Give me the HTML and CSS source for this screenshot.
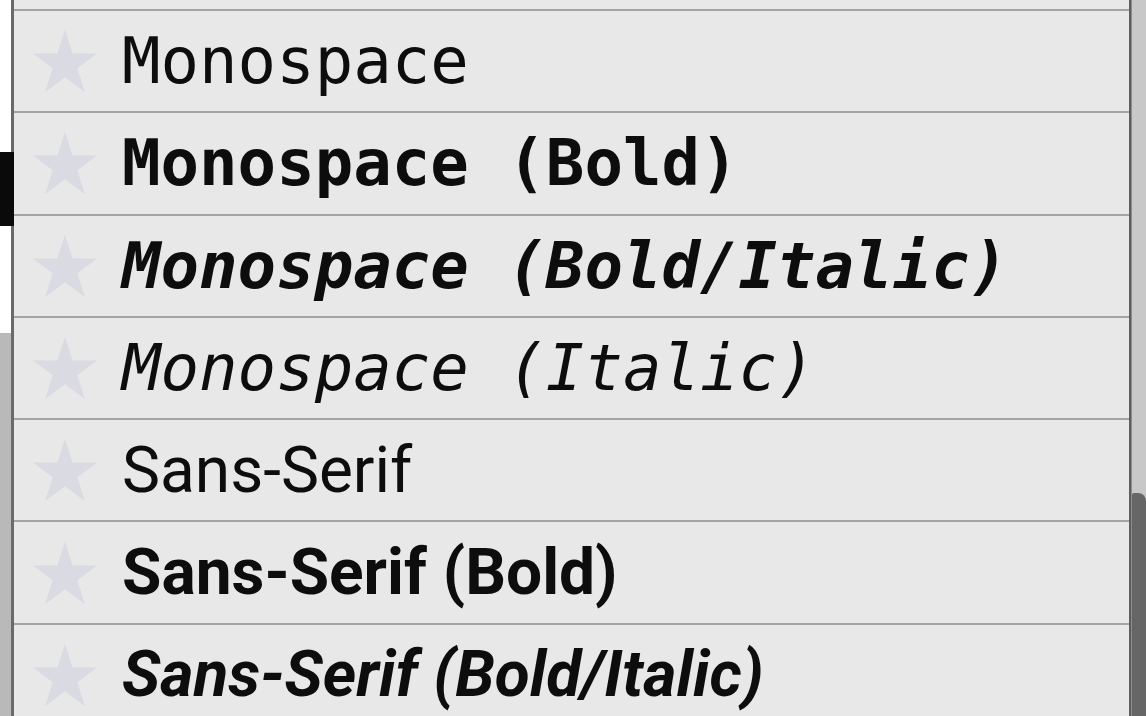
FILE: index.html
```html
<!DOCTYPE html>
<html>
<head>
<meta charset="utf-8">
<link rel="stylesheet" href="styles.css">
</head>
<body>
<div class="app">
  <div class="edge">
    <div class="edge-white"></div>
    <div class="edge-black"></div>
    <div class="edge-white2"></div>
    <div class="edge-grey"></div>
  </div>
  <div class="list">
    <div class="row partial"></div>
    <div class="row">
      <svg class="star" viewBox="0 0 64 62"><polygon points="32,0 39.6,23.6 64,23.6 44.3,38.2 51.8,62 32,47.3 12.2,62 19.7,38.2 0,23.6 24.4,23.6"/></svg>
      <span class="label mono">Monospace</span>
    </div>
    <div class="row">
      <svg class="star" viewBox="0 0 64 62"><polygon points="32,0 39.6,23.6 64,23.6 44.3,38.2 51.8,62 32,47.3 12.2,62 19.7,38.2 0,23.6 24.4,23.6"/></svg>
      <span class="label mono bold">Monospace (Bold)</span>
    </div>
    <div class="row">
      <svg class="star" viewBox="0 0 64 62"><polygon points="32,0 39.6,23.6 64,23.6 44.3,38.2 51.8,62 32,47.3 12.2,62 19.7,38.2 0,23.6 24.4,23.6"/></svg>
      <span class="label mono bold italic">Monospace (Bold/Italic)</span>
    </div>
    <div class="row">
      <svg class="star" viewBox="0 0 64 62"><polygon points="32,0 39.6,23.6 64,23.6 44.3,38.2 51.8,62 32,47.3 12.2,62 19.7,38.2 0,23.6 24.4,23.6"/></svg>
      <span class="label mono italic">Monospace (Italic)</span>
    </div>
    <div class="row">
      <svg class="star" viewBox="0 0 64 62"><polygon points="32,0 39.6,23.6 64,23.6 44.3,38.2 51.8,62 32,47.3 12.2,62 19.7,38.2 0,23.6 24.4,23.6"/></svg>
      <span class="label sans">Sans-Serif</span>
    </div>
    <div class="row">
      <svg class="star" viewBox="0 0 64 62"><polygon points="32,0 39.6,23.6 64,23.6 44.3,38.2 51.8,62 32,47.3 12.2,62 19.7,38.2 0,23.6 24.4,23.6"/></svg>
      <span class="label sans bold">Sans-Serif (Bold)</span>
    </div>
    <div class="row">
      <svg class="star" viewBox="0 0 64 62"><polygon points="32,0 39.6,23.6 64,23.6 44.3,38.2 51.8,62 32,47.3 12.2,62 19.7,38.2 0,23.6 24.4,23.6"/></svg>
      <span class="label sans bold italic">Sans-Serif (Bold/Italic)</span>
    </div>
  </div>
  <div class="scrollbar">
    <div class="track"></div>
    <div class="thumb"></div>
  </div>
</div>
</body>
</html>
```

FILE: styles.css
```css
html, body {
  margin: 0;
  padding: 0;
  background: #ffffff;
  overflow: hidden;
}

.app {
  display: flex;
  width: 1146px;
  height: 716px;
  overflow: hidden;
}

.edge {
  width: 11px;
  display: flex;
  flex-direction: column;
  flex: none;
}

.edge-white { height: 152px; background: #ffffff; }
.edge-black { height: 74px; background: #0a0a0a; margin-right: -3px; position: relative; z-index: 1; }
.edge-white2 { height: 107px; background: #ffffff; }
.edge-grey { flex: 1; background: #b9b9b9; }

.list {
  flex: 1;
  background: #e8e8e8;
  border-left: 3px solid #6a6a6a;
  border-right: 2px solid #5e5e5e;
  display: flex;
  flex-direction: column;
  overflow: hidden;
}

.row {
  flex: none;
  height: 100.3px;
  border-top: 2px solid #a4a4a4;
  display: flex;
  align-items: center;
  padding-left: 19px;
}

.row.partial {
  height: 9px;
  border-top: none;
}

.star {
  width: 64px;
  height: 62px;
  fill: #d9dae2;
  flex: none;
}

.label {
  margin-left: 25px;
  font-size: 64px;
  color: #0d0d0d;
  white-space: nowrap;
  line-height: normal;
}

.mono { font-family: "DejaVu Sans Mono", monospace; }
.sans { font-family: Roboto, "Liberation Sans", sans-serif; }
.bold { font-weight: bold; }
.italic { font-style: italic; }

.scrollbar {
  width: 14px;
  flex: none;
  display: flex;
  flex-direction: column;
  background: #c8c8c8;
  border-left: 1px solid #8a8a8a;
}

.track { height: 493px; }

.thumb {
  flex: 1;
  background: #666666;
  border-top-right-radius: 8px;
  border-top-left-radius: 2px;
}
```
